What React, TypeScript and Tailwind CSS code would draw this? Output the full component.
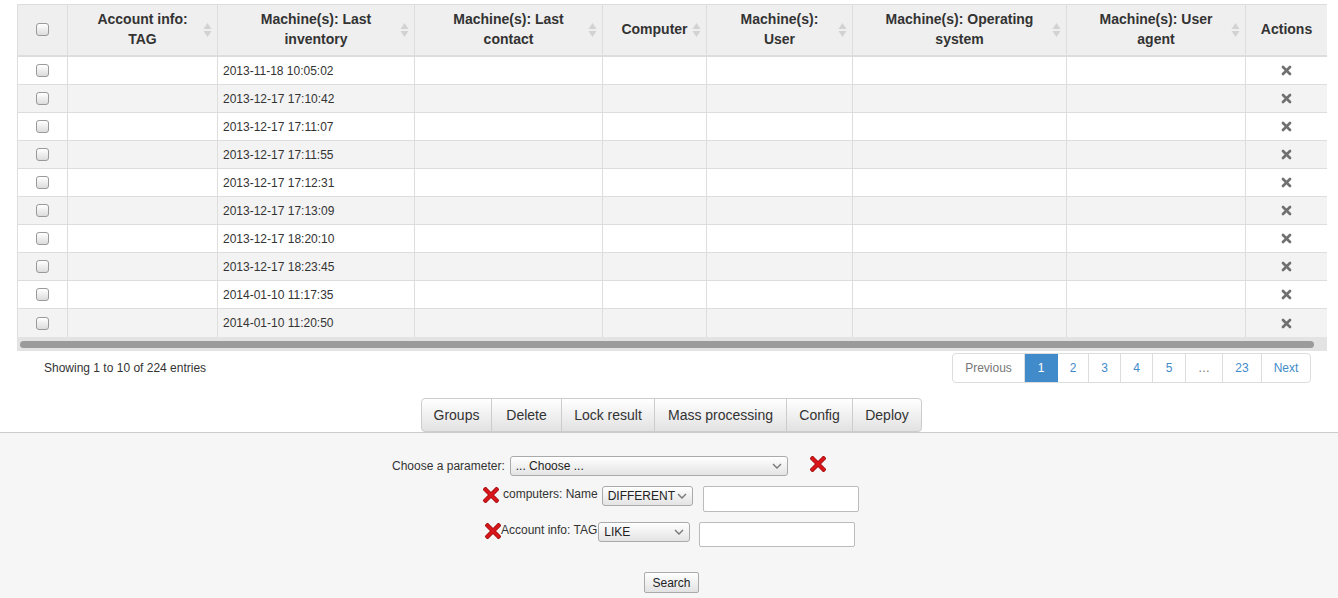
import React from 'react';

const rows = [
  '2013-11-18 10:05:02',
  '2013-12-17 17:10:42',
  '2013-12-17 17:11:07',
  '2013-12-17 17:11:55',
  '2013-12-17 17:12:31',
  '2013-12-17 17:13:09',
  '2013-12-17 18:20:10',
  '2013-12-17 18:23:45',
  '2014-01-10 11:17:35',
  '2014-01-10 11:20:50',
];

const columns: { lines: string[]; sort: boolean }[] = [
  { lines: [], sort: false },
  { lines: ['Account info:', 'TAG'], sort: true },
  { lines: ['Machine(s): Last', 'inventory'], sort: true },
  { lines: ['Machine(s): Last', 'contact'], sort: true },
  { lines: ['Computer'], sort: true },
  { lines: ['Machine(s):', 'User'], sort: true },
  { lines: ['Machine(s): Operating', 'system'], sort: true },
  { lines: ['Machine(s): User', 'agent'], sort: true },
  { lines: ['Actions'], sort: false },
];

const gridCols = 'grid grid-cols-[50px_150px_197px_188px_104px_146px_214px_179px_81px]';

const pages = [
  { label: '1', w: 'w-[33px]' },
  { label: '2', w: 'w-[31px]' },
  { label: '3', w: 'w-[32px]' },
  { label: '4', w: 'w-[32px]' },
  { label: '5', w: 'w-[33px]' },
  { label: '…', w: 'w-[37px]' },
  { label: '23', w: 'w-[39px]' },
];

const actions = [
  { label: 'Groups', w: 'w-[69px]' },
  { label: 'Delete', w: 'w-[70px]' },
  { label: 'Lock result', w: 'w-[93px]' },
  { label: 'Mass processing', w: 'w-[132px]' },
  { label: 'Config', w: 'w-[66px]' },
  { label: 'Deploy', w: 'w-[69px]' },
];

function Checkbox() {
  return (
    <div className="w-[13px] h-[13px] rounded-[3px] border border-[#9a9a9a] bg-gradient-to-b from-white to-[#dcdcdc]" />
  );
}

function SortIcon() {
  return (
    <svg width="9" height="16" viewBox="0 0 9 16" className="absolute right-[5px] top-1/2 -translate-y-1/2">
      <path d="M4.5 1 L8.5 7 L0.5 7 Z" fill="#d2d2d2" />
      <path d="M4.5 15 L8.5 9 L0.5 9 Z" fill="#d2d2d2" />
    </svg>
  );
}

function GrayX() {
  return (
    <svg width="11" height="11" viewBox="0 0 11 11">
      <path d="M2 2 L9 9 M9 2 L2 9" stroke="#707070" strokeWidth="2.7" strokeLinecap="round" />
    </svg>
  );
}

function RedX() {
  return (
    <svg width="16" height="16" viewBox="0 0 16 16">
      <path d="M2.5 2.5 L13.5 13.5 M13.5 2.5 L2.5 13.5" stroke="#9b0a0a" strokeWidth="4.4" strokeLinecap="square" />
      <path d="M2.5 2.5 L13.5 13.5 M13.5 2.5 L2.5 13.5" stroke="#d9161c" strokeWidth="3" strokeLinecap="square" />
    </svg>
  );
}

function FakeSelect({ label, width }: { label: string; width: string }) {
  return (
    <div
      className={`${width} h-[20px] flex items-center justify-between rounded-[3px] border border-[#aaa] bg-gradient-to-b from-white to-[#e4e4e4] pl-[5px] pr-[5px] text-[12px] text-[#222] shadow-[inset_0_1px_0_#fff]`}
    >
      <span>{label}</span>
      <svg width="10" height="6" viewBox="0 0 10 6">
        <path d="M1 1 L5 5 L9 1" fill="none" stroke="#777" strokeWidth="1.4" />
      </svg>
    </div>
  );
}

export default function App() {
  return (
    <div className="w-[1338px] h-[598px] overflow-hidden bg-white font-['Liberation_Sans',Arial,sans-serif] text-[#333]">
      <div className="pt-[4px] ml-[17px] w-[1310px]">
        {/* Results table */}
        <div className="border-l border-t border-[#ddd]">
          <div className={gridCols}>
            {columns.map((col, i) => (
              <div
                key={i}
                className={`relative h-[52px] flex items-center justify-center bg-[#efefef] border-b-2 border-[#ddd] ${i < 8 ? 'border-r' : ''} text-[14px] font-bold leading-[20px] text-center pb-[2px]`}
              >
                {i === 0 ? (
                  <Checkbox />
                ) : (
                  <div>
                    {col.lines.map((l) => (
                      <div key={l}>{l}</div>
                    ))}
                  </div>
                )}
                {col.sort && <SortIcon />}
              </div>
            ))}
          </div>

          {rows.map((date, r) => (
            <div key={date} className={`${gridCols} ${r % 2 === 1 ? 'bg-[#f3f3f3]' : 'bg-white'}`}>
              {columns.map((_, i) => (
                <div
                  key={i}
                  className={`h-[28px] flex items-center border-[#ddd] ${r < 9 ? 'border-b' : ''} ${i < 8 ? 'border-r' : ''} ${
                    i === 0 || i === 8 ? 'justify-center' : 'pl-[5px]'
                  } text-[12px]`}
                >
                  {i === 0 && <Checkbox />}
                  {i === 2 && date}
                  {i === 8 && <GrayX />}
                </div>
              ))}
            </div>
          ))}
        </div>

        {/* Horizontal scrollbar */}
        <div className="h-[14px] bg-[#e3e3e3] flex items-center pl-[3px] pr-[13px]">
          <div className="h-[7px] w-full rounded-full bg-[#9b9b9b]" />
        </div>

        {/* Info + pagination */}
        <div className="mt-[2px] flex items-center justify-between pl-[27px] pr-[16px]">
          <div className="text-[12px]">Showing 1 to 10 of 224 entries</div>
          <div className="flex h-[30px] text-[12px] rounded-[4px] border border-[#ddd] overflow-hidden">
            <div className="w-[72px] flex items-center justify-center text-[#777] border-r border-[#ddd]">Previous</div>
            {pages.map((p) => (
              <div
                key={p.label}
                className={`${p.w} flex items-center justify-center border-r ${
                  p.label === '1'
                    ? 'bg-[#428bca] border-[#428bca] text-white'
                    : p.label === '…'
                    ? 'text-[#777] border-[#ddd]'
                    : 'text-[#428bca] border-[#ddd]'
                }`}
              >
                {p.label}
              </div>
            ))}
            <div className="w-[48px] flex items-center justify-center text-[#428bca]">Next</div>
          </div>
        </div>
      </div>

      {/* Action buttons */}
      <div className="mt-[15px] flex justify-center pl-[5px]">
        <div className="flex h-[34px] text-[14px] text-[#333] rounded-[4px] border border-[#ccc] overflow-hidden bg-gradient-to-b from-white to-[#e2e2e2]">
          {actions.map((b, i) => (
            <div key={b.label} className={`${b.w} flex items-center justify-center ${i > 0 ? 'border-l border-[#ccc]' : ''}`}>
              {b.label}
            </div>
          ))}
        </div>
      </div>

      {/* Search panel */}
      <div className="border-t border-[#ccc] bg-[#f6f6f6] h-[200px] text-[12px] text-[#333]">
        <div className="ml-[392px] pt-[23px]">
          <div className="flex items-center h-[20px]">
            <span className="mr-[5px]">Choose a parameter:</span>
            <FakeSelect label="... Choose ..." width="w-[278px]" />
            <span className="ml-[22px] mt-[-4px]">
              <RedX />
            </span>
          </div>

          <div className="flex items-start mt-[10px] ml-[91px]">
            <span className="mt-[1px]">
              <RedX />
            </span>
            <span className="ml-[4px] mt-[1px] leading-[14px]">computers: Name</span>
            <span className="ml-[4px]">
              <FakeSelect label="DIFFERENT" width="w-[91px]" />
            </span>
            <div className="ml-[10px] w-[156px] h-[26px] bg-white border border-[#bbb] rounded-[2px]" />
          </div>

          <div className="flex items-start mt-[10px] ml-[93px]">
            <span className="mt-[1px]">
              <RedX />
            </span>
            <span className="mt-[1px] leading-[14px]">Account info: TAG</span>
            <span className="ml-[1px]">
              <FakeSelect label="LIKE" width="w-[92px]" />
            </span>
            <div className="ml-[9px] w-[156px] h-[25px] bg-white border border-[#bbb] rounded-[2px]" />
          </div>

          <div className="mt-[25px] ml-[252px]">
            <div className="inline-flex items-center justify-center w-[55px] h-[21px] rounded-[2px] border border-[#aaa] bg-gradient-to-b from-white to-[#e2e2e2] text-[12px] text-[#222]">
              Search
            </div>
          </div>
        </div>
      </div>
    </div>
  );
}
